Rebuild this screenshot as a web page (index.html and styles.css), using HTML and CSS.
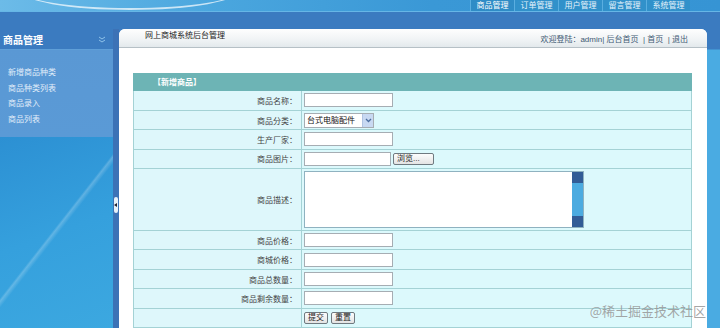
FILE: index.html
```html
<!DOCTYPE html>
<html lang="zh-CN">
<head>
    <meta charset="UTF-8">
    <title>网上商城系统后台管理</title>
    <link rel="stylesheet" href="styles.css">
</head>
<body>
    <div class="top">
        <div class="top__sky"></div>
        <ul class="tabs">
            <li class="tabs__item tabs__item--active">商品管理</li>
            <li class="tabs__item">订单管理</li>
            <li class="tabs__item">用户管理</li>
            <li class="tabs__item">留言管理</li>
            <li class="tabs__item">系统管理</li>
        </ul>
    </div>
    <div class="band"></div>

    <div class="frame">
        <!-- left menu -->
        <div class="side">
            <div class="side__header">
                <span class="side__title">商品管理</span>
                <svg class="side__toggle" width="8" height="7" viewBox="0 0 8 7">
                    <polyline points="1,1 4,3 7,1" fill="none" stroke="#8fc3ea" stroke-width="1"/>
                    <polyline points="1,4 4,6 7,4" fill="none" stroke="#8fc3ea" stroke-width="1"/>
                </svg>
            </div>
            <ul class="side__menu">
                <li><a href="#">新增商品种类</a></li>
                <li><a href="#">商品种类列表</a></li>
                <li><a href="#">商品录入</a></li>
                <li><a href="#">商品列表</a></li>
            </ul>
            <div class="side__bottom"></div>
        </div>

        <div class="split">
            <span class="split__handle"></span>
        </div>

        <!-- content -->
        <div class="main">
            <div class="main__header">
                <span class="main__title">网上商城系统后台管理</span>
                <span class="main__links">欢迎登陆：admin| 后台首页 &nbsp;| 首页 &nbsp;| 退出</span>
            </div>
            <div class="main__body">
                <table class="form">
                    <tr>
                        <td class="form__head" colspan="2">【新增商品】</td>
                    </tr>
                    <tr>
                        <td class="form__label form__label--first">商品名称：</td>
                        <td class="form__field"><input class="text" type="text"></td>
                    </tr>
                    <tr>
                        <td class="form__label">商品分类：</td>
                        <td class="form__field">
                            <span class="select">
                                <select>
                                    <option>台式电脑配件</option>
                                </select>
                                <span class="select__arrow">
                                    <svg width="7" height="5" viewBox="0 0 7 5"><polyline points="1,1 3.5,3.5 6,1" fill="none" stroke="#4d6fa0" stroke-width="1.3"/></svg>
                                </span>
                            </span>
                        </td>
                    </tr>
                    <tr>
                        <td class="form__label">生产厂家：</td>
                        <td class="form__field"><input class="text" type="text"></td>
                    </tr>
                    <tr>
                        <td class="form__label">商品图片：</td>
                        <td class="form__field">
                            <input class="text text--file" type="text"><button class="btn btn--browse">浏览...</button>
                        </td>
                    </tr>
                    <tr>
                        <td class="form__label form__label--tall">商品描述：</td>
                        <td class="form__field">
                            <span class="area">
                                <textarea></textarea>
                                <span class="area__bar">
                                    <span class="area__cap"></span>
                                    <span class="area__track"></span>
                                    <span class="area__cap"></span>
                                </span>
                            </span>
                        </td>
                    </tr>
                    <tr>
                        <td class="form__label">商品价格：</td>
                        <td class="form__field"><input class="text" type="text"></td>
                    </tr>
                    <tr>
                        <td class="form__label">商城价格：</td>
                        <td class="form__field"><input class="text" type="text"></td>
                    </tr>
                    <tr>
                        <td class="form__label">商品总数量：</td>
                        <td class="form__field"><input class="text" type="text"></td>
                    </tr>
                    <tr>
                        <td class="form__label">商品剩余数量：</td>
                        <td class="form__field"><input class="text" type="text"></td>
                    </tr>
                    <tr>
                        <td class="form__label"></td>
                        <td class="form__field">
                            <button class="btn">提交</button>
                            <button class="btn">重置</button>
                        </td>
                    </tr>
                </table>
            </div>
        </div>

        <div class="edge"></div>
    </div>

    <div class="mark">@稀土掘金技术社区</div>
</body>
</html>
```

FILE: styles.css
```css
* {
    box-sizing: border-box;
    margin: 0;
    padding: 0;
}

html, body {
    height: 100%;
    overflow: hidden;
}

body {
    font-family: 'Liberation Sans', 'Noto Sans CJK SC', sans-serif;
    font-size: 8px;
    color: #333;
    background: #3b7bc0;
    position: relative;
}

ul {
    list-style: none;
}

a {
    color: inherit;
    text-decoration: none;
}

/* TOP BAR
=============== */
.top {
    position: relative;
    display: flex;
    justify-content: flex-end;
    height: 12px;
    background: linear-gradient(90deg, #6cbbe8 0%, #4aa6de 30%, #3a98d6 60%, #3694d4 100%);
    border-bottom: 1px solid #66b6e6;
    overflow: hidden;
}

.top__sky {
    position: absolute;
    left: 20px;
    top: -30px;
    width: 220px;
    height: 40px;
    border-radius: 50%;
    border-bottom: 2px solid rgba(255, 255, 255, 0.7);
}

.tabs {
    display: flex;
    margin-right: 30px;
}

.tabs__item {
    width: 44px;
    height: 12px;
    line-height: 12px;
    text-align: center;
    color: #e6f3fb;
    background: #3191ca;
    border-left: 1px solid #5aaee0;
}

.tabs__item--active {
    color: #fff;
    background: #2f8cc6;
}

.band {
    height: 17px;
    background: #3b7bc0;
}

/* FRAME
=============== */
.frame {
    display: flex;
    height: calc(100% - 29px);
}

/* SIDEBAR */
.side {
    display: flex;
    flex-direction: column;
    width: 113px;
    background: #3aa4dd;
}

.side__header {
    display: flex;
    align-items: center;
    justify-content: space-between;
    height: 21px;
    padding: 1px 7px 0 3px;
    background: #3b7bc0;
    border-bottom: 1px solid #5f9fd8;
}

.side__title {
    font-size: 10px;
    font-weight: bold;
    color: #fff;
}

.side__menu {
    height: 87px;
    padding: 15px 0 0 8px;
    background: linear-gradient(180deg, #5a98d4 0%, #5a9ad6 100%);
}

.side__menu li {
    height: 15.7px;
    line-height: 15px;
    color: #e2eefa;
}

.side__bottom {
    flex: 1;
    background:
        linear-gradient(128deg, transparent 0%, transparent 48%, rgba(255, 255, 255, 0.22) 49%, transparent 51%, transparent 100%),
        linear-gradient(160deg, #2c90d3 0%, #35a0dd 50%, #3ca8e0 100%);
}

/* SPLITTER */
.split {
    position: relative;
    width: 6px;
    background: #3c72b6;
}

.split__handle {
    position: absolute;
    top: 168px;
    left: 1px;
    width: 4px;
    height: 16px;
    border-radius: 2px;
    background: #e6f0f8;
}

.split__handle::after {
    content: '';
    position: absolute;
    top: 6px;
    left: 0;
    border-right: 3px solid #223;
    border-top: 2px solid transparent;
    border-bottom: 2px solid transparent;
}

/* MAIN */
.main {
    display: flex;
    flex-direction: column;
    flex: 1;
    background: #fff;
    border-radius: 6px 6px 0 0;
}

.main__header {
    display: flex;
    justify-content: space-between;
    height: 21px;
    padding: 0 19px 0 26px;
    background: linear-gradient(180deg, #fefefe 0%, #f0f3f5 60%, #e3e9ec 100%);
    border-radius: 6px 6px 0 0;
    border-bottom: 1px solid #b6c0c6;
}

.main__title {
    color: #222;
}

.main__links {
    align-self: flex-end;
    padding-bottom: 3px;
    color: #3f5a73;
}

.main__body {
    flex: 1;
    padding: 25px 15px 0 14px;
}

.edge {
    width: 13px;
    background: linear-gradient(180deg, #3b7bc0 0px, #3b7bc0 20px, #4aabe2 21px, #4aabe2 100%);
}

/* FORM TABLE
=============== */
.form {
    width: 100%;
    border-collapse: collapse;
    background: #dcf9fc;
}

.form td {
    height: 19.4px;
    border: 1px solid #a4d2d5;
    padding: 0;
}

.form__head {
    height: 17px !important;
    padding-left: 19px !important;
    color: #fff;
    font-weight: bold;
    background: #6db4b5;
    border-color: #6db4b5 !important;
}

.form__label {
    width: 168px;
    text-align: right;
    padding-right: 4px !important;
    color: #444;
    background: #def7fb;
}

.form__label--first {
    height: 20px !important;
}

.form__label--tall {
    height: 62px !important;
}

.form__field {
    padding-left: 2px !important;
    font-size: 0;
}

.text {
    width: 89px;
    height: 14px;
    vertical-align: middle;
    border: 1px solid #a6adb3;
    background: #fff;
}

.text--file {
    width: 87px;
}

.select {
    position: relative;
    display: inline-block;
    vertical-align: middle;
}

.select select {
    appearance: none;
    -webkit-appearance: none;
    width: 70px;
    height: 15px;
    padding-left: 2px;
    font-family: inherit;
    font-size: 8px;
    color: #111;
    background: #fff;
    border: 1px solid #a6adb3;
    border-radius: 0;
}

.select__arrow {
    position: absolute;
    top: 1px;
    right: 1px;
    display: flex;
    align-items: center;
    justify-content: center;
    width: 11px;
    height: 13px;
    background: #c8d9f2;
    border-left: 1px solid #b0c4e2;
}

.area {
    display: inline-flex;
    vertical-align: middle;
    border: 1px solid #8fb2c0;
}

.area textarea {
    width: 267px;
    height: 55px;
    border: none;
    resize: none;
    background: #fff;
}

.area__bar {
    display: flex;
    flex-direction: column;
    width: 11px;
}

.area__cap {
    height: 11px;
    background: #325c96;
}

.area__track {
    flex: 1;
    background: #4cabe0;
}

.btn {
    height: 12px;
    padding: 0 3px;
    margin-right: 3px;
    vertical-align: middle;
    font-family: inherit;
    font-size: 8px;
    line-height: 10px;
    color: #222;
    background: linear-gradient(180deg, #fdfdfd 0%, #e4e4e4 100%);
    border: 1px solid #6f7a80;
    border-radius: 2px;
}

.btn--browse {
    width: 41px;
    margin-left: 2px;
    text-align: left;
    padding-left: 3px;
}

.mark {
    position: absolute;
    right: 14px;
    bottom: 8px;
    font-size: 13px;
    color: rgba(150, 150, 150, 0.85);
    font-family: 'Noto Sans CJK SC', sans-serif;
}
```
